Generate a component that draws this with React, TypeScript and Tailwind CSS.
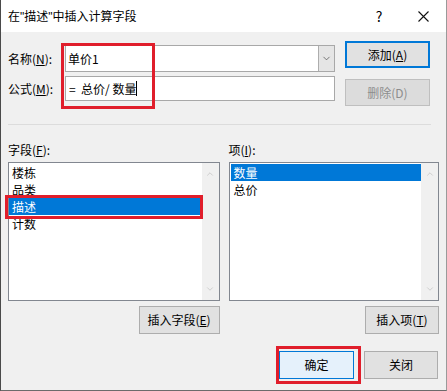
import { ChevronDown, ChevronUp } from "lucide-react";

const FIELDS = ["楼栋", "品类", "描述", "计数"];
const ITEMS = ["数量", "总价"];

const BTN_KIND = {
  normal: "border-[#adadad] bg-[#e1e1e1] text-black",
  focus: "border-2 border-[#0078d7] bg-[#e1e1e1] text-black",
  primary: "border-[#0078d7] bg-[#e5f1fb] text-black",
  disabled: "border-[#bfbfbf] bg-[#dcdcdc] text-[#8d8d8d]",
};

function Btn({
  children,
  kind = "normal",
  className = "",
}: {
  children: React.ReactNode;
  kind?: keyof typeof BTN_KIND;
  className?: string;
}) {
  return (
    <div
      className={`flex items-center justify-center border text-[12px] ${BTN_KIND[kind]} ${className}`}
    >
      {children}
    </div>
  );
}

function ListBox({
  rows,
  selected,
  inset,
}: {
  rows: string[];
  selected: number;
  inset?: boolean;
}) {
  return (
    <div className="flex h-[139px] border border-[#828790] bg-white">
      <div className={`flex-1 ${inset ? "pt-px pl-px" : "pt-px"}`}>
        {rows.map((r, i) => (
          <div
            key={r}
            className={`h-[17px] pl-[3px] text-[12px] leading-[17px] ${
              i === selected ? "bg-[#0078d7] text-white" : "text-black"
            }`}
          >
            {r}
          </div>
        ))}
      </div>
      <div className="flex w-[17px] flex-col items-center justify-between bg-[#f0f0f0] py-[6px] text-[#c2c2c2]">
        <ChevronUp size={10} strokeWidth={1.8} />
        <ChevronDown size={10} strokeWidth={1.8} />
      </div>
    </div>
  );
}

export default function App() {
  return (
    <div
      className="relative h-[391px] w-[447px] border-b border-l border-r border-b-[#6b6b6b] border-l-[#4a4a4a] border-r-[#9a9a9a] bg-[#f0f0f0] text-black"
      style={{ fontFamily: '"Noto Sans CJK SC", "Microsoft YaHei", sans-serif' }}
    >
      {/* title bar */}
      <div className="flex h-[32px] items-center bg-white pl-[7px] text-[12px]">
        <span className="flex-1">
          在<span className="font-['Liberation_Sans']">"</span>描述
          <span className="font-['Liberation_Sans']">"</span>中插入计算字段
        </span>
        <span className="w-[14px] text-center text-[14px]">?</span>
        <span className="ml-[30px] mr-[16px] flex w-[14px] justify-center">
          <svg width="11" height="11" viewBox="0 0 11 11">
            <path d="M0.5 0.5 L10.5 10.5 M10.5 0.5 L0.5 10.5" stroke="#111" strokeWidth="1.1" />
          </svg>
        </span>
      </div>

      <div className="px-[7px]">
        {/* name / formula + buttons */}
        <div className="mt-[9px] flex">
          <div className="w-[327px]">
            <div className="mt-[4px] flex h-[27px] items-center">
              <span className="w-[57px] text-[12px]">
                名称(<u>N</u>):
              </span>
              <div className="flex h-full w-[270px] border border-[#a8a8a8] bg-white">
                <div className="flex flex-1 items-center pl-[2px] text-[12px]">单价1</div>
                <div className="flex w-[16px] items-center justify-center border-l border-[#adadad] bg-[#e5e5e5] text-[#444]">
                  <ChevronDown size={11} strokeWidth={1.5} />
                </div>
              </div>
            </div>
            <div className="mt-[4px] flex h-[25px] items-center">
              <span className="w-[57px] text-[12px]">
                公式(<u>M</u>):
              </span>
              <div className="flex h-full w-[270px] items-center whitespace-pre border border-[#a8a8a8] bg-white pl-[3px] text-[12px]">
                {"=  总价/ 数量"}
                <span className="inline-block h-[15px] w-px bg-black" />
              </div>
            </div>
          </div>
          <div className="ml-[10px] flex w-[85px] flex-col">
            <Btn kind="focus" className="h-[27px]">
              添加(<u>A</u>)
            </Btn>
            <Btn kind="disabled" className="mt-[11px] h-[27px]">
              删除(D)
            </Btn>
          </div>
        </div>

        {/* separator */}
        <div className="mt-[18px] h-px w-[423px] bg-[#dcdcdc]" />

        {/* lists */}
        <div className="flex gap-[9px]">
          <div className="flex w-[212px] flex-col">
            <div className="mt-[17px] h-[16px] text-[12px] leading-[16px]">
              字段(<u>F</u>):
            </div>
            <div className="mt-[4px]">
              <ListBox rows={FIELDS} selected={2} />
            </div>
            <Btn className="mt-[5px] h-[28px] w-[81px] self-end">
              插入字段(<u>E</u>)
            </Btn>
          </div>
          <div className="flex w-[211px] flex-col">
            <div className="mt-[17px] h-[16px] text-[12px] leading-[16px]">
              项(<u>I</u>):
            </div>
            <div className="mt-[4px]">
              <ListBox rows={ITEMS} selected={0} inset />
            </div>
            <Btn className="mt-[5px] h-[28px] w-[74px] self-end">
              插入项(<u>T</u>)
            </Btn>
          </div>
        </div>

        {/* bottom buttons */}
        <div className="mt-[17px] flex justify-end gap-[10px] pr-px">
          <Btn kind="primary" className="h-[28px] w-[75px]">
            确定
          </Btn>
          <Btn className="h-[28px] w-[74px]">关闭</Btn>
        </div>
      </div>

      {/* red annotation boxes */}
      <div className="absolute left-[60px] top-[43px] h-[66px] w-[94px] border-[3px] border-[#e01e2b]" />
      <div className="absolute left-[4px] top-[195px] h-[24px] w-[198px] border-[3px] border-[#e01e2b]" />
      <div className="absolute left-[275px] top-[346px] h-[38px] w-[85px] border-[3px] border-[#e01e2b]" />
    </div>
  );
}
